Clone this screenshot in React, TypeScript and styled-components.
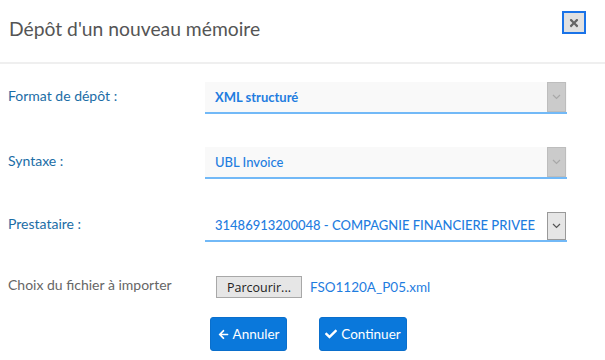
import React from "react";
import styled, { createGlobalStyle } from "styled-components";
import { FaArrowLeft, FaCheck, FaTimes } from "react-icons/fa";

const Global = createGlobalStyle`
  html, body { margin: 0; padding: 0; background: #fff; }
  body { font-family: Lato, "Open Sans", "Liberation Sans", sans-serif; }
  * { box-sizing: border-box; }
`;

const Modal = styled.div`
  width: 605px;
  height: 360px;
  background: #fff;
  overflow: hidden;
`;

const Header = styled.div`
  height: 64px;
  border-bottom: 2px solid #efefef;
  display: flex;
  justify-content: space-between;
  align-items: flex-start;
  padding: 0 19px 0 9px;
`;

const Title = styled.h1`
  margin: 18px 0 0 0;
  font-size: 19.3px;
  font-weight: 400;
  color: #555;
  line-height: 22px;
`;

const CloseButton = styled.button`
  margin-top: 11px;
  width: 24px;
  height: 23px;
  border: 2px solid #1a73e8;
  background: #e1e1e1;
  color: #666;
  display: flex;
  align-items: center;
  justify-content: center;
  padding: 0;
`;

const Body = styled.div`
  padding: 18px 0 0 8px;
`;

const Row = styled.div<{ $mb: number }>`
  display: grid;
  grid-template-columns: 197px 362px;
  align-items: start;
  margin-bottom: ${(p) => p.$mb}px;
`;

const Label = styled.div<{ $muted?: boolean; $pt: number }>`
  padding-top: ${(p) => p.$pt}px;
  font-size: 14px;
  line-height: 16px;
  color: ${(p) => (p.$muted ? "#666" : "#1b6da6")};
`;

const Select = styled.div<{ $disabled?: boolean }>`
  height: 32px;
  background: ${(p) => (p.$disabled ? "#f9f9f9" : "#fff")};
  border-bottom: 2px solid #72b9f7;
  display: flex;
  align-items: stretch;
  justify-content: space-between;
`;

const SelectText = styled.span<{ $bold?: boolean }>`
  padding-left: 10px;
  align-self: center;
  font-size: 13px;
  font-weight: ${(p) => (p.$bold ? 700 : 500)};
  color: #1f7de0;
  white-space: nowrap;
`;

const Arrow = styled.span<{ $disabled?: boolean }>`
  width: 19px;
  margin-right: 1px;
  margin-top: ${(p) => (p.$disabled ? 0 : 2)}px;
  background: ${(p) => (p.$disabled ? "#cbcbcb" : "#e6e6e6")};
  border: 1px solid ${(p) => (p.$disabled ? "#bdbdbd" : "#999")};
  display: flex;
  align-items: center;
  justify-content: center;
`;

const FileField = styled.div`
  display: flex;
  align-items: center;
  gap: 8px;
  padding-left: 11px;
`;

const BrowseButton = styled.button`
  height: 22px;
  width: 86px;
  padding: 0;
  background: #e6e6e6;
  border: 1px solid #a8a8a8;
  font-family: "Open Sans", "Liberation Sans", sans-serif;
  font-size: 12.5px;
  color: #222;
`;

const FileName = styled.span`
  font-size: 13.5px;
  color: #1f7de0;
`;

const Actions = styled.div`
  display: flex;
  gap: 32px;
  padding-left: 202px;
`;

const ActionButton = styled.button<{ $w: number }>`
  width: ${(p) => p.$w}px;
  height: 34px;
  background: #0a78db;
  border: 1px solid #0a6fcc;
  border-radius: 3px;
  color: #fff;
  font-family: Lato, "Open Sans", "Liberation Sans", sans-serif;
  font-size: 13.5px;
  display: flex;
  align-items: center;
  justify-content: center;
  gap: 4px;
  padding: 0;
`;

const Chevron = ({ color }: { color: string }) => (
  <svg width="9" height="6" viewBox="0 0 9 6">
    <path d="M1 1 L4.5 4.5 L8 1" fill="none" stroke={color} strokeWidth="1.2" />
  </svg>
);

export default function App() {
  return (
    <>
      <Global />
      <Modal>
        <Header>
          <Title>Dépôt d'un nouveau mémoire</Title>
          <CloseButton aria-label="Fermer">
            <FaTimes size={12} />
          </CloseButton>
        </Header>
        <Body>
          <Row $mb={33}>
            <Label $pt={6}>Format de dépôt :</Label>
            <Select $disabled>
              <SelectText $bold>XML structuré</SelectText>
              <Arrow $disabled>
                <Chevron color="#a8a8a8" />
              </Arrow>
            </Select>
          </Row>
          <Row $mb={31}>
            <Label $pt={6}>Syntaxe :</Label>
            <Select $disabled>
              <SelectText>UBL Invoice</SelectText>
              <Arrow $disabled>
                <Chevron color="#a8a8a8" />
              </Arrow>
            </Select>
          </Row>
          <Row $mb={34}>
            <Label $pt={6}>Prestataire :</Label>
            <Select>
              <SelectText>31486913200048 - COMPAGNIE FINANCIERE PRIVEE</SelectText>
              <Arrow>
                <Chevron color="#555" />
              </Arrow>
            </Select>
          </Row>
          <Row $mb={19}>
            <Label $muted $pt={1}>Choix du fichier à importer</Label>
            <FileField>
              <BrowseButton>Parcourir...</BrowseButton>
              <FileName>FSO1120A_P05.xml</FileName>
            </FileField>
          </Row>
          <Actions>
            <ActionButton $w={77}>
              <FaArrowLeft size={11} /> Annuler
            </ActionButton>
            <ActionButton $w={88}>
              <FaCheck size={12} /> Continuer
            </ActionButton>
          </Actions>
        </Body>
      </Modal>
    </>
  );
}
